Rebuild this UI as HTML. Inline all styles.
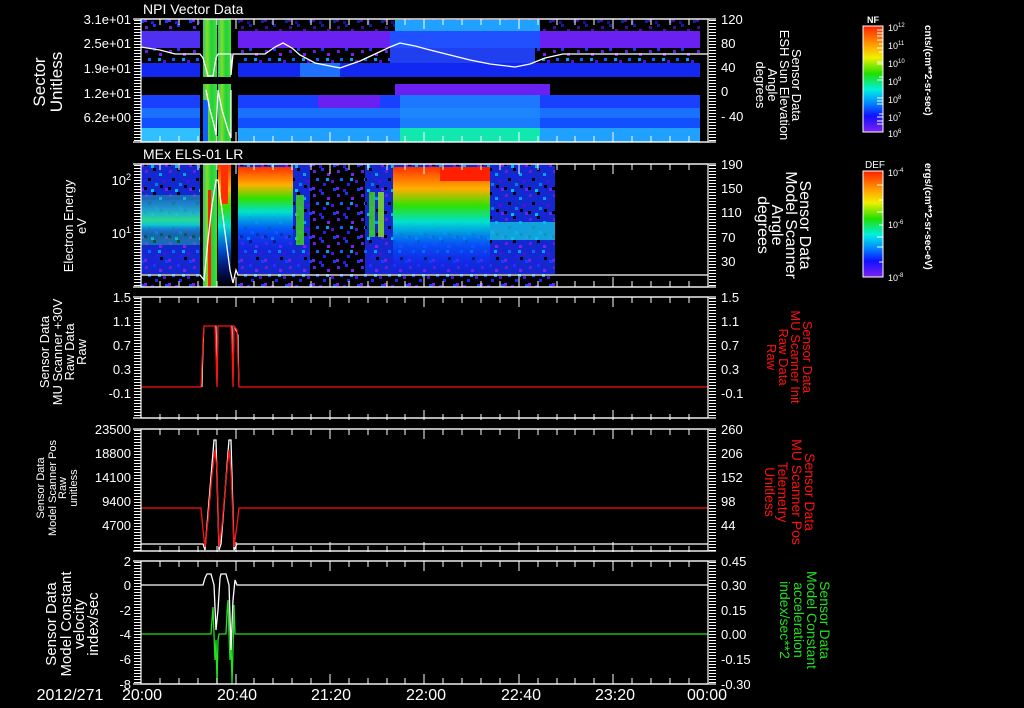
<!DOCTYPE html>
<html><head><meta charset="utf-8"><style>
html,body{margin:0;padding:0;background:#000;}
svg{display:block}
text{font-family:"Liberation Sans",sans-serif;fill:#fff}
</style></head><body>
<svg width="1024" height="708" viewBox="0 0 1024 708" xmlns="http://www.w3.org/2000/svg">
<defs>
<linearGradient id="cb" x1="0" y1="0" x2="0" y2="1">
<stop offset="0" stop-color="#ff2000"/><stop offset="0.18" stop-color="#ffa000"/><stop offset="0.3" stop-color="#f0f000"/><stop offset="0.45" stop-color="#20e000"/><stop offset="0.6" stop-color="#00f0e0"/><stop offset="0.72" stop-color="#0090ff"/><stop offset="0.85" stop-color="#1010ff"/><stop offset="1" stop-color="#8020f0"/>
</linearGradient>
<linearGradient id="stripe" x1="0" y1="0" x2="1" y2="0">
<stop offset="0" stop-color="#30c080"/><stop offset="0.3" stop-color="#80e020"/><stop offset="0.6" stop-color="#20d040"/><stop offset="1" stop-color="#40e030"/>
</linearGradient>
<pattern id="spk" width="24" height="24" patternUnits="userSpaceOnUse">
<rect x="1" y="2" width="3" height="3" fill="#6020e0"/><rect x="9" y="0" width="3" height="3" fill="#2030ff"/><rect x="15" y="5" width="3" height="3" fill="#8020f0"/><rect x="4" y="10" width="3" height="3" fill="#1060ff"/><rect x="19" y="12" width="3" height="3" fill="#5010e0"/><rect x="11" y="15" width="3" height="3" fill="#2020ff"/><rect x="0" y="19" width="3" height="3" fill="#7020f0"/><rect x="21" y="20" width="3" height="3" fill="#1040ff"/><rect x="7" y="21" width="3" height="3" fill="#3010f0"/><rect x="14" y="10" width="3" height="3" fill="#00a0ff"/>
</pattern>
<pattern id="spk2" width="24" height="24" patternUnits="userSpaceOnUse">
<rect width="24" height="24" fill="#1428d0"/>
<rect x="1" y="2" width="3" height="3" fill="#6020e0"/><rect x="9" y="0" width="3" height="3" fill="#000"/><rect x="15" y="5" width="3" height="3" fill="#00a0ff"/><rect x="4" y="10" width="3" height="3" fill="#000"/><rect x="19" y="12" width="3" height="3" fill="#5010e0"/><rect x="11" y="15" width="3" height="3" fill="#0080e0"/><rect x="0" y="19" width="3" height="3" fill="#000"/><rect x="21" y="20" width="3" height="3" fill="#7020f0"/><rect x="7" y="21" width="3" height="3" fill="#00c0e0"/><rect x="16" y="17" width="3" height="3" fill="#000"/>
</pattern>
<linearGradient id="p2a" x1="0" y1="0" x2="0" y2="1">
<stop offset="0" stop-color="#ff3000"/><stop offset="0.2" stop-color="#ffb000"/><stop offset="0.35" stop-color="#30e000"/><stop offset="0.5" stop-color="#00e0d0"/><stop offset="0.7" stop-color="#0060ff" stop-opacity="0.8"/><stop offset="1" stop-color="#1010ff" stop-opacity="0"/>
</linearGradient>
<linearGradient id="p2b" x1="0" y1="0" x2="0" y2="1">
<stop offset="0" stop-color="#2040ff" stop-opacity="0.6"/><stop offset="0.3" stop-color="#20b0ff" stop-opacity="0.8"/><stop offset="0.5" stop-color="#30e090"/><stop offset="0.62" stop-color="#00c0ff"/><stop offset="0.8" stop-color="#1020ff" stop-opacity="0.5"/><stop offset="1" stop-color="#000" stop-opacity="0"/>
</linearGradient>
</defs>

<!-- PANEL 1 data -->
<g>
<rect x="141" y="19" width="60" height="10" fill="url(#spk)"/>
<rect x="238" y="19" width="462" height="12" fill="url(#spk)" opacity="0.6"/>
<rect x="395" y="20" width="145" height="12" fill="#20a0ff"/>
<rect x="141" y="31" width="559" height="17" fill="#6a20f0"/>
<rect x="141" y="31" width="60" height="17" fill="#5030f0"/>
<rect x="390" y="31" width="150" height="17" fill="#2050ff"/>
<rect x="141" y="48" width="559" height="15" fill="url(#spk)"/>
<rect x="390" y="48" width="145" height="15" fill="#2040f0"/>
<rect x="141" y="63" width="559" height="14" fill="#1228f0"/>
<rect x="300" y="63" width="40" height="14" fill="#2070ff"/>
<rect x="395" y="84" width="155" height="12" fill="#6a20f0"/>
<rect x="141" y="95" width="559" height="47" fill="#1a40ff"/>
<rect x="318" y="95" width="62" height="13" fill="#6a20f0"/>
<rect x="141" y="108" width="559" height="10" fill="#1a70ff"/>
<rect x="141" y="118" width="559" height="10" fill="#1050ff"/>
<rect x="141" y="128" width="559" height="14" fill="#20a0ff"/>
<rect x="400" y="95" width="140" height="47" fill="#2090ff" opacity="0.7"/>
<rect x="400" y="128" width="140" height="14" fill="#10e8b0"/>
<rect x="141" y="128" width="60" height="14" fill="#30c0ff"/>
<rect x="200" y="19" width="38" height="123" fill="#000"/>
<rect x="203" y="19" width="14" height="58" fill="url(#stripe)"/>
<rect x="218" y="19" width="13" height="58" fill="url(#stripe)"/>
<rect x="203" y="84" width="14" height="58" fill="url(#stripe)"/>
<rect x="218" y="84" width="13" height="58" fill="url(#stripe)"/>
<rect x="203" y="100" width="5" height="42" fill="#1060ff"/>
<polyline fill="none" stroke="#fff" stroke-width="1.3" points="141,47 160,50 175,54 200,54 203,58 208,76 213,76 216,58 218,54 231,54 231,75 233,54 238,54 265,54 275,47 283,43 292,48 300,55 315,63 340,68 360,61 375,54 390,47 400,43 415,46 430,50 450,55 470,60 490,64 515,67 530,64 545,58 563,54 708,54"/>
<polyline fill="none" stroke="#fff" stroke-width="1.3" points="206,90 210,110 214,125 216,135 218,90 222,110 228,130 231,138 231,90"/>
</g>

<!-- PANEL 2 data -->
<g>
<rect x="141" y="164" width="414" height="110" fill="url(#spk2)"/>
<rect x="141" y="245" width="414" height="42" fill="url(#spk)"/>
<rect x="310" y="164" width="55" height="123" fill="#000"/>
<rect x="310" y="164" width="55" height="123" fill="url(#spk)"/>
<rect x="141" y="200" width="60" height="40" fill="url(#p2b)"/>
<rect x="141" y="195" width="60" height="50" fill="#20d090" opacity="0.4"/>
<rect x="238" y="167" width="55" height="90" fill="url(#p2a)"/>
<rect x="296" y="195" width="8" height="50" fill="#40d020" opacity="0.85"/>
<rect x="369" y="192" width="6" height="45" fill="#40d020" opacity="0.85"/>
<rect x="378" y="192" width="6" height="45" fill="#80e020" opacity="0.85"/>
<rect x="393" y="167" width="97" height="110" fill="url(#p2a)"/>
<rect x="440" y="167" width="50" height="14" fill="#ff2000"/>
<rect x="490" y="222" width="65" height="18" fill="#10c0e0" opacity="0.8"/>
<rect x="200" y="164" width="38" height="123" fill="#000"/>
<rect x="203" y="164" width="14" height="123" fill="url(#stripe)"/>
<rect x="208" y="190" width="3" height="97" fill="#ff2000"/>
<rect x="218" y="164" width="13" height="123" fill="url(#p2a)"/>
<rect x="221" y="164" width="7" height="40" fill="#ff3000"/>
<polyline fill="none" stroke="#fff" stroke-width="1.3" points="141,275 200,275 204,280 208,240 212,205 216,180 218,180 222,210 226,240 230,270 233,283 236,270 238,275 708,275"/>
</g>

<!-- PANEL 3 data -->
<polyline fill="none" stroke="#fff" stroke-width="1" points="202,387 203,350 204,326 216,326 217,385 218,326 232,326 233,380 234,326 238,335 239,387"/>
<polyline fill="none" stroke="#ff1010" stroke-width="1.3" points="141,387 201,387 203,340 204,326 215,326 216,355 217,387 218,326 231,326 232,345 233,387 234,326 237,330 239,387 708,387"/>

<!-- PANEL 4 data -->
<polyline fill="none" stroke="#fff" stroke-width="1.3" points="141,544 203,544 205,550 214,440 216,440 219,550 221,544 229,440 231,440 234,550 237,544 708,544"/>
<polyline fill="none" stroke="#ff1010" stroke-width="1.3" points="141,508 201,508 203,530 205,547 208,520 212,475 215,450 217,470 219,547 222,525 226,480 229,450 231,470 234,547 237,525 239,508 708,508"/>

<!-- PANEL 5 data -->
<polyline fill="none" stroke="#20e020" stroke-width="1.3" points="141,634 211,634 212,620 213,607 214,634 215,660 216,640 217,684 218,640 219,634 226,634 227,612 228,600 229,634 230,660 231,640 232,684 233,650 234,605 235,634 708,634"/>
<polyline fill="none" stroke="#fff" stroke-width="1.3" points="141,585 203,585 205,578 207,574 211,574 214,585 216,630 218,610 220,578 221,574 226,574 229,585 231,650 233,600 235,580 237,585 708,585"/>

<!-- AXES -->
<g stroke="#fff" fill="none">
<g stroke-width="1.2">
<rect x="141" y="19" width="567" height="123"/>
<rect x="141" y="164" width="567" height="123"/>
<rect x="141" y="297" width="567" height="121"/>
<rect x="141" y="429" width="567" height="122"/>
<rect x="141" y="561" width="567" height="123"/>
<line x1="133" y1="19" x2="716" y2="19"/><line x1="133" y1="142" x2="716" y2="142"/>
<line x1="133" y1="164" x2="716" y2="164"/><line x1="133" y1="287" x2="716" y2="287"/>
<line x1="133" y1="297" x2="716" y2="297"/><line x1="133" y1="418" x2="716" y2="418"/>
<line x1="133" y1="429" x2="716" y2="429"/><line x1="133" y1="551" x2="716" y2="551"/>
<line x1="133" y1="561" x2="716" y2="561"/><line x1="133" y1="684" x2="716" y2="684"/>
</g>
<g stroke-width="7" stroke-dasharray="1 2">
<line x1="137.5" y1="20" x2="137.5" y2="142"/><line x1="712.5" y1="20" x2="712.5" y2="142"/>
<line x1="137.5" y1="165" x2="137.5" y2="287"/><line x1="712.5" y1="165" x2="712.5" y2="287"/>
<line x1="137.5" y1="298" x2="137.5" y2="418"/><line x1="712.5" y1="298" x2="712.5" y2="418"/>
<line x1="137.5" y1="430" x2="137.5" y2="551"/><line x1="712.5" y1="430" x2="712.5" y2="551"/>
<line x1="137.5" y1="562" x2="137.5" y2="684"/><line x1="712.5" y1="562" x2="712.5" y2="684"/>
</g>
<g stroke-width="1" id="xt">
<path d="M160,19v6M179,19v6M198,19v6M217,19v6M236,19v10M254,19v6M273,19v6M292,19v6M311,19v6M330,19v10M349,19v6M368,19v6M387,19v6M405,19v6M424,19v10M443,19v6M462,19v6M481,19v6M500,19v6M519,19v10M538,19v6M557,19v6M575,19v6M594,19v6M613,19v10M632,19v6M651,19v6M670,19v6M689,19v6
M160,142v-6M179,142v-6M198,142v-6M217,142v-6M236,142v-10M254,142v-6M273,142v-6M292,142v-6M311,142v-6M330,142v-10M349,142v-6M368,142v-6M387,142v-6M405,142v-6M424,142v-10M443,142v-6M462,142v-6M481,142v-6M500,142v-6M519,142v-10M538,142v-6M557,142v-6M575,142v-6M594,142v-6M613,142v-10M632,142v-6M651,142v-6M670,142v-6M689,142v-6"/>
</g>
<use href="#xt" y="145"/>
<use href="#xt" y="278"/>
<use href="#xt" y="410"/>
<use href="#xt" y="542"/>
</g>

<!-- colorbars -->
<rect x="863" y="26" width="20" height="106" fill="url(#cb)" stroke="#fff" stroke-width="1"/>
<rect x="863" y="171" width="20" height="106" fill="url(#cb)" stroke="#fff" stroke-width="1"/>
<g stroke="#fff" stroke-width="1">
<path d="M877,30h6M877,33h6M877,36h6M877,40h6M879,44h4M877,48h6M879,52h4M877,62h6M877,64h6M879,77h4M877,80h6M877,98h6M877,101h6M877,104h6M879,114h4M877,117h6M877,121h6M877,124h6"/>
<path d="M877,185h6M879,200h4M877,212h6M879,225h4M877,237h6M877,247h6M879,262h4"/>
</g>
<g font-size="9">
<text x="888" y="31">10<tspan font-size="6" dy="-4">12</tspan></text>
<text x="888" y="49">10<tspan font-size="6" dy="-4">11</tspan></text>
<text x="888" y="67">10<tspan font-size="6" dy="-4">10</tspan></text>
<text x="888" y="85">10<tspan font-size="6" dy="-4">9</tspan></text>
<text x="888" y="103">10<tspan font-size="6" dy="-4">8</tspan></text>
<text x="888" y="121">10<tspan font-size="6" dy="-4">7</tspan></text>
<text x="888" y="137">10<tspan font-size="6" dy="-4">6</tspan></text>
<text x="888" y="176">10<tspan font-size="6" dy="-4">-4</tspan></text>
<text x="888" y="228">10<tspan font-size="6" dy="-4">-6</tspan></text>
<text x="888" y="281">10<tspan font-size="6" dy="-4">-8</tspan></text>
</g>
<text x="867" y="23" font-size="9" font-weight="bold">NF</text>
<text x="865" y="168" font-size="10">DEF</text>
<text transform="translate(925,25) rotate(90)" font-size="10" font-weight="bold">cnts/(cm**2-sr-sec)</text>
<text transform="translate(925,163) rotate(90)" font-size="10" font-weight="bold">ergs/(cm**2-sr-sec-eV)</text>

<text x="143" y="14" font-size="14">NPI Vector Data</text>
<text x="143" y="159" font-size="14">MEx ELS-01 LR</text>

<g font-size="13" text-anchor="end">
<text x="131" y="24">3.1e+01</text><text x="131" y="48">2.5e+01</text><text x="131" y="73">1.9e+01</text><text x="131" y="98">1.2e+01</text><text x="131" y="122">6.2e+00</text>
<text x="131" y="185">10<tspan font-size="9" dy="-5">2</tspan></text><text x="131" y="238">10<tspan font-size="9" dy="-5">1</tspan></text>
<text x="131" y="302">1.5</text><text x="131" y="326">1.1</text><text x="131" y="350">0.7</text><text x="131" y="374">0.3</text><text x="131" y="398">-0.1</text>
<text x="131" y="434">23500</text><text x="131" y="458">18800</text><text x="131" y="482">14100</text><text x="131" y="506">9400</text><text x="131" y="530">4700</text>
<text x="131" y="566">2</text><text x="131" y="590">0</text><text x="131" y="615">-2</text><text x="131" y="639">-4</text><text x="131" y="664">-6</text><text x="131" y="689">-8</text>
</g>
<g font-size="13">
<text x="721" y="24">120</text><text x="721" y="48">80</text><text x="721" y="72">40</text><text x="721" y="96">0</text><text x="721" y="121">- 40</text>
<text x="721" y="169">190</text><text x="721" y="193">150</text><text x="721" y="217">110</text><text x="721" y="242">70</text><text x="721" y="266">30</text>
<text x="721" y="302">1.5</text><text x="721" y="326">1.1</text><text x="721" y="350">0.7</text><text x="721" y="374">0.3</text><text x="721" y="398">-0.1</text>
<text x="721" y="434">260</text><text x="721" y="458">206</text><text x="721" y="482">152</text><text x="721" y="506">98</text><text x="721" y="530">44</text>
<text x="721" y="566">0.45</text><text x="721" y="590">0.30</text><text x="721" y="615">0.15</text><text x="721" y="639">0.00</text><text x="721" y="664">-0.15</text><text x="721" y="689">-0.30</text>
</g>

<g text-anchor="middle">
<text transform="translate(45,82) rotate(-90)" font-size="17">Sector</text>
<text transform="translate(62,82) rotate(-90)" font-size="17">Unitless</text>
<text transform="translate(73,226) rotate(-90)" font-size="13">Electron Energy</text>
<text transform="translate(86,226) rotate(-90)" font-size="13">eV</text>
<text transform="translate(49,352) rotate(-90)" font-size="13">Sensor Data</text>
<text transform="translate(62,352) rotate(-90)" font-size="13">MU Scanner +30V</text>
<text transform="translate(74,352) rotate(-90)" font-size="13">Raw Data</text>
<text transform="translate(86,352) rotate(-90)" font-size="13">Raw</text>
<text transform="translate(44,488) rotate(-90)" font-size="11">Sensor Data</text>
<text transform="translate(56,488) rotate(-90)" font-size="11">Model Scanner Pos</text>
<text transform="translate(66,488) rotate(-90)" font-size="11">Raw</text>
<text transform="translate(77,488) rotate(-90)" font-size="11">unitless</text>
<text transform="translate(56,624) rotate(-90)" font-size="15">Sensor Data</text>
<text transform="translate(71,624) rotate(-90)" font-size="15">Model Constant</text>
<text transform="translate(84,624) rotate(-90)" font-size="15">velocity</text>
<text transform="translate(98,624) rotate(-90)" font-size="15">index/sec</text>
</g>
<g text-anchor="middle">
<g font-size="13">
<text transform="translate(792,85) rotate(90)">Sensor Data</text>
<text transform="translate(780,85) rotate(90)">ESH Sun Elevation</text>
<text transform="translate(768,85) rotate(90)">Angle</text>
<text transform="translate(756,85) rotate(90)">degrees</text>
</g>
<g font-size="16">
<text transform="translate(800,225) rotate(90)">Sensor Data</text>
<text transform="translate(786,225) rotate(90)">Model Scanner</text>
<text transform="translate(772,225) rotate(90)">Angle</text>
<text transform="translate(758,225) rotate(90)">degrees</text>
</g>
<g font-size="13">
<text transform="translate(803,357) rotate(90)" style="fill:#ff1010">Sensor Data</text>
<text transform="translate(791,357) rotate(90)" style="fill:#ff1010">MU Scanner Init</text>
<text transform="translate(779,357) rotate(90)" style="fill:#ff1010">Raw Data</text>
<text transform="translate(767,357) rotate(90)" style="fill:#ff1010">Raw</text>
</g>
<g font-size="14">
<text transform="translate(805,492) rotate(90)" style="fill:#ff1010">Sensor Data</text>
<text transform="translate(792,492) rotate(90)" style="fill:#ff1010">MU Scanner Pos</text>
<text transform="translate(778,492) rotate(90)" style="fill:#ff1010">Telemetry</text>
<text transform="translate(765,492) rotate(90)" style="fill:#ff1010">Unitless</text>
</g>
<g font-size="14">
<text transform="translate(820,620) rotate(90)" style="fill:#20e020">Sensor Data</text>
<text transform="translate(807,620) rotate(90)" style="fill:#20e020">Model Constant</text>
<text transform="translate(794,620) rotate(90)" style="fill:#20e020">acceleration</text>
<text transform="translate(780,620) rotate(90)" style="fill:#20e020">index/sec**2</text>
</g>
</g>

<g font-size="16" text-anchor="middle">
<text x="70" y="700">2012/271</text>
<text x="142" y="700">20:00</text>
<text x="237" y="700">20:40</text>
<text x="331" y="700">21:20</text>
<text x="426" y="700">22:00</text>
<text x="521" y="700">22:40</text>
<text x="615" y="700">23:20</text>
<text x="707" y="700">00:00</text>
</g>
</svg>
</body></html>
